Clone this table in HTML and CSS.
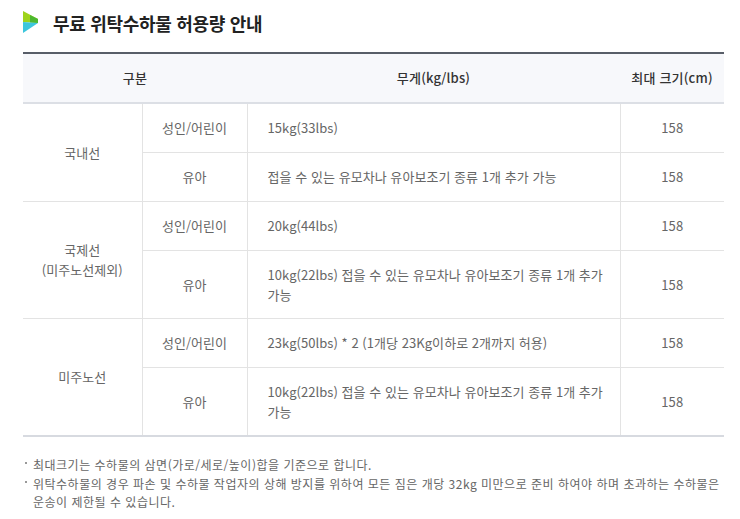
FILE: index.html
```html
<!DOCTYPE html>
<html lang="ko">
<head>
<meta charset="utf-8">
<link rel="stylesheet" href="styles.css">
</head>
<body>
<div class="page">
  <h2 class="title">
    <svg class="logo" width="16" height="23" viewBox="0 0 16 23" aria-hidden="true">
      <polygon points="0,0 15,8 15,12 0,11" fill="#9ed31b"/>
      <polygon points="7,4 15,8 15,12 7,11.5" fill="#4cb830"/>
      <polygon points="0,11 15,12 0,22" fill="#3cc6dc"/>
    </svg>
    <span>무료 위탁수하물 허용량 안내</span>
  </h2>
  <table class="tbl">
    <colgroup>
      <col class="c1"><col class="c2"><col class="c3"><col class="c4">
    </colgroup>
    <thead>
      <tr>
        <th colspan="2">구분</th>
        <th>무게(kg/lbs)</th>
        <th>최대 크기(cm)</th>
      </tr>
    </thead>
    <tbody>
      <tr>
        <td rowspan="2" class="grp">국내선</td>
        <td class="ctr">성인/어린이</td>
        <td class="lft">15kg(33lbs)</td>
        <td class="ctr last">158</td>
      </tr>
      <tr>
        <td class="ctr">유아</td>
        <td class="lft">접을 수 있는 유모차나 유아보조기 종류 1개 추가 가능</td>
        <td class="ctr last">158</td>
      </tr>
      <tr>
        <td rowspan="2" class="grp">국제선<br>(미주노선제외)</td>
        <td class="ctr">성인/어린이</td>
        <td class="lft">20kg(44lbs)</td>
        <td class="ctr last">158</td>
      </tr>
      <tr>
        <td class="ctr">유아</td>
        <td class="lft">10kg(22lbs) 접을 수 있는 유모차나 유아보조기 종류 1개 추가 가능</td>
        <td class="ctr last">158</td>
      </tr>
      <tr>
        <td rowspan="2" class="grp">미주노선</td>
        <td class="ctr">성인/어린이</td>
        <td class="lft">23kg(50lbs) * 2 (1개당 23Kg이하로 2개까지 허용)</td>
        <td class="ctr last">158</td>
      </tr>
      <tr>
        <td class="ctr">유아</td>
        <td class="lft">10kg(22lbs) 접을 수 있는 유모차나 유아보조기 종류 1개 추가 가능</td>
        <td class="ctr last">158</td>
      </tr>
    </tbody>
  </table>
  <ul class="notes">
    <li>최대크기는 수하물의 삼면(가로/세로/높이)합을 기준으로 합니다.</li>
    <li>위탁수하물의 경우 파손 및 수하물 작업자의 상해 방지를 위하여 모든 짐은 개당 32kg 미만으로 준비 하여야 하며 초과하는 수하물은 운송이 제한될 수 있습니다.</li>
  </ul>
</div>
</body>
</html>
```
FILE: styles.css
```css
* { box-sizing: border-box; }
html, body {
  margin: 0;
  padding: 0;
  background: #fff;
}
body {
  font-family: "Noto Sans CJK KR", "Noto Sans", sans-serif;
  color: #666;
  word-break: keep-all;
}
.page {
  padding: 11px 16px 0 23px;
}
.title {
  display: flex;
  align-items: center;
  gap: 14px;
  margin: 0;
  height: 23px;
  font-size: 18px;
  font-weight: 700;
  color: #222;
  letter-spacing: -0.3px;
}
.logo { flex: none; }
.tbl {
  width: 701px;
  margin-top: 18px;
  border-collapse: collapse;
  table-layout: fixed;
  font-size: 13px;
  line-height: 20px;
  letter-spacing: 0.05px;
  border-top: 2px solid #585e68;
  border-bottom: 2px solid #d7dae0;
}
.c1 { width: 119px; }
.c2 { width: 105px; }
.c3 { width: 373px; }
.c4 { width: 104px; }
.tbl th {
  background: #f7f8fb;
  color: #333;
  font-weight: 500;
  letter-spacing: 0.2px;
  height: 50px;
  padding: 0;
  text-align: center;
  border-bottom: 2px solid #dcdfe5;
}
.tbl td {
  padding: 14px 20px;
  border-bottom: 1px solid #e3e3e3;
  border-right: 1px solid #e3e3e3;
  vertical-align: middle;
}
.tbl tbody tr:last-child td { border-bottom: none; }
.tbl td.grp { text-align: center; padding-left: 4px; padding-right: 4px; border-bottom: 1px solid #e3e3e3; }
.tbl td.ctr { text-align: center; padding-left: 4px; padding-right: 4px; }
.tbl td.lft { text-align: left; padding-right: 8px; line-height: 19.5px; }
.tbl td.last { border-right: none; }
.notes {
  list-style: none;
  margin: 19px 0 0;
  padding: 0;
  font-size: 12px;
  line-height: 18px;
  letter-spacing: 0.5px;
  color: #666;
}
.notes li {
  position: relative;
  padding-left: 10px;
  margin-bottom: 1px;
}
.notes li::before {
  content: "";
  position: absolute;
  left: 2px;
  top: 6px;
  width: 2px;
  height: 2px;
  background: #999;
}
```
